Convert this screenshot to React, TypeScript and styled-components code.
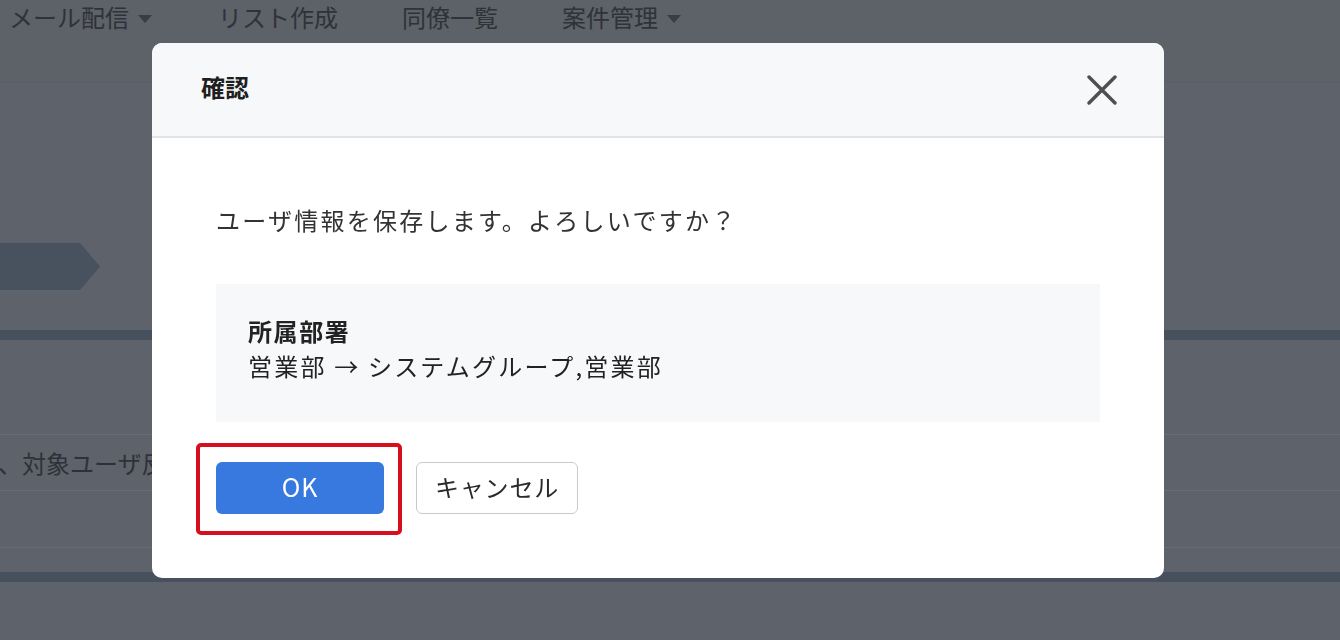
import React from "react";
import styled, { createGlobalStyle } from "styled-components";

const Global = createGlobalStyle`
  html, body { margin: 0; padding: 0; }
  body {
    width: 1340px;
    height: 640px;
    overflow: hidden;
    background: #5e626a;
    font-family: "Noto Sans CJK JP", "Noto Sans", sans-serif;
  }
`;

const Page = styled.div`
  width: 1340px;
  height: 640px;
  background: #5e626a;
  overflow: hidden;
  display: flex;
  flex-direction: column;
`;

const Nav = styled.nav`
  height: 82px;
  border-bottom: 1px solid #5a5e65;
  background: #5d6168;
  display: flex;
  align-items: flex-start;
  gap: 64px;
  padding-left: 9px;
`;

const NavItem = styled.div<{ $lead?: number }>`
  display: flex;
  align-items: center;
  gap: 9px;
  margin-left: ${(p) => p.$lead ?? 0}px;
  font-size: 24px;
  line-height: 34px;
  color: #2f3238;
  white-space: nowrap;
`;

const Caret = styled.span`
  width: 0;
  height: 0;
  border-left: 7px solid transparent;
  border-right: 7px solid transparent;
  border-top: 8px solid #3a3d43;
  margin-top: 4px;
`;

const Content = styled.div`
  display: flex;
  flex-direction: column;
  padding-top: 160px;
`;

const StepTab = styled.div`
  width: 100px;
  height: 47px;
  background: #48525f;
  clip-path: polygon(0 0, 80px 0, 100px 50%, 80px 100%, 0 100%);
`;

const Bar = styled.div<{ $top: number }>`
  margin-top: ${(p) => p.$top}px;
  height: 10px;
  background: #47515e;
`;

const Row = styled.div<{ $h: number }>`
  height: ${(p) => p.$h}px;
  border-bottom: 1px solid #686c74;
  display: flex;
  align-items: center;
`;

const RowText = styled.span`
  margin-left: -2px;
  font-size: 24px;
  color: #2e3137;
  white-space: nowrap;
`;

const Overlay = styled.div`
  position: fixed;
  inset: 0;
  padding: 43px 0 0 152px;
  display: flex;
  align-items: flex-start;
`;

const Modal = styled.div`
  width: 1012px;
  background: #ffffff;
  border-radius: 10px;
  overflow: hidden;
  display: flex;
  flex-direction: column;
`;

const Header = styled.div`
  height: 93px;
  background: #f7f8fa;
  border-bottom: 2px solid #e2e3e6;
  display: flex;
  align-items: center;
  justify-content: space-between;
  padding: 0 46px 0 49px;
`;

const Title = styled.h2`
  margin: 0 0 6px;
  font-size: 24px;
  font-weight: 700;
  color: #1f1f1f;
`;

const CloseButton = styled.button`
  width: 32px;
  height: 32px;
  padding: 0;
  border: 0;
  background: transparent;
  display: flex;
  align-items: center;
  justify-content: center;
`;

const Body = styled.div`
  padding: 64px 64px 64px;
  display: flex;
  flex-direction: column;
`;

const Message = styled.p`
  margin: 0;
  font-size: 24px;
  line-height: 36px;
  letter-spacing: 2.25px;
  color: #333333;
`;

const InfoBox = styled.div`
  margin-top: 46px;
  background: #f7f8fa;
  padding: 29px 32px 39px;
  font-size: 24px;
  line-height: 35px;
  color: #222222;
`;

const InfoLabel = styled.div`
  font-weight: 700;
  letter-spacing: 1.6px;
`;

const InfoValue = styled.div`
  letter-spacing: 2.2px;
`;

const Actions = styled.div`
  margin-top: 40px;
  display: flex;
  gap: 32px;
`;

const Highlight = styled.div`
  position: relative;
  display: flex;
`;

const HighlightFrame = styled.span`
  position: absolute;
  top: -19px;
  left: -20px;
  right: -18px;
  bottom: -21px;
  border: 4px solid #d60f1e;
  border-radius: 5px;
  pointer-events: none;
`;

const Button = styled.button<{ $primary?: boolean; $w: number }>`
  width: ${(p) => p.$w}px;
  height: 52px;
  border-radius: 6px;
  font-family: "Noto Sans CJK JP", "Noto Sans", sans-serif;
  font-size: ${(p) => (p.$primary ? 25 : 24)}px;
  letter-spacing: 0.8px;
  display: flex;
  align-items: center;
  justify-content: center;
  padding: 0 0 4px;
  cursor: pointer;
  background: ${(p) => (p.$primary ? "#3879df" : "#ffffff")};
  color: ${(p) => (p.$primary ? "#ffffff" : "#2a2a2a")};
  border: ${(p) => (p.$primary ? "none" : "1.5px solid #c9c9c9")};
`;

export default function App() {
  return (
    <>
      <Global />
      <Page>
        <Nav>
          <NavItem>
            メール配信<Caret />
          </NavItem>
          <NavItem $lead={2}>リスト作成</NavItem>
          <NavItem>同僚一覧</NavItem>
          <NavItem>
            案件管理<Caret />
          </NavItem>
        </Nav>
        <Content>
          <StepTab />
          <Bar $top={40} />
          <Row $h={94} />
          <Row $h={55}>
            <RowText>、対象ユーザ反映を行います</RowText>
          </Row>
          <Row $h={56} />
          <Bar $top={24} />
        </Content>
      </Page>
      <Overlay>
        <Modal>
          <Header>
            <Title>確認</Title>
            <CloseButton aria-label="閉じる">
              <svg width="30" height="30" viewBox="0 0 30 30">
                <path
                  d="M2 2 L28 28 M28 2 L2 28"
                  stroke="#4f4f4f"
                  strokeWidth="3.4"
                  strokeLinecap="round"
                />
              </svg>
            </CloseButton>
          </Header>
          <Body>
            <Message>ユーザ情報を保存します。よろしいですか？</Message>
            <InfoBox>
              <InfoLabel>所属部署</InfoLabel>
              <InfoValue>営業部 → システムグループ,営業部</InfoValue>
            </InfoBox>
            <Actions>
              <Highlight>
                <Button $primary $w={168}>OK</Button>
                <HighlightFrame />
              </Highlight>
              <Button $w={162}>キャンセル</Button>
            </Actions>
          </Body>
        </Modal>
      </Overlay>
    </>
  );
}
